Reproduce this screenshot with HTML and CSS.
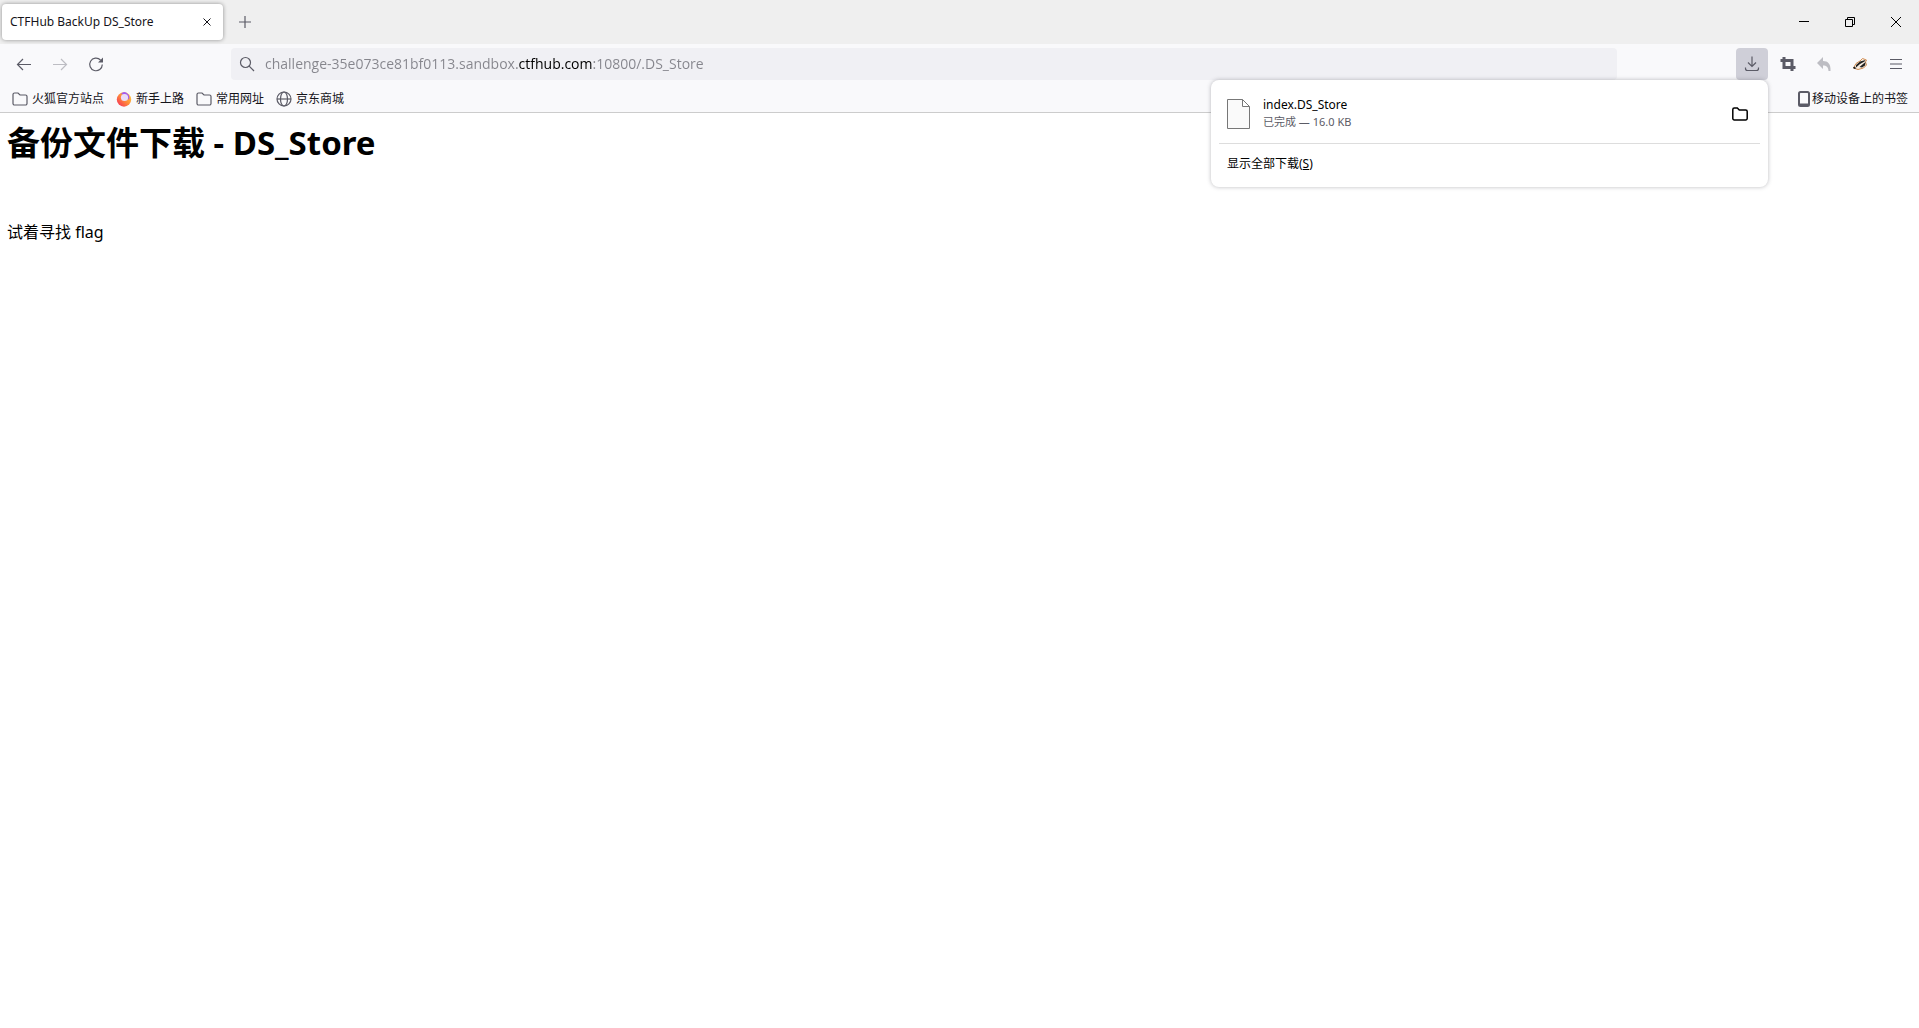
FILE: index.html
```html
<!DOCTYPE html>
<html lang="zh-CN">
<head>
<meta charset="utf-8">
<title>CTFHub BackUp DS_Store</title>
<link rel="stylesheet" href="styles.css">
</head>
<body>
<header class="chrome">
  <div class="tabbar">
    <div class="tab">
      <span class="tab-title">CTFHub BackUp DS_Store</span>
      <button class="tab-close" aria-label="关闭标签页"><svg width="8" height="8" viewBox="0 0 8 8"><path d="M.5.5l7 7M7.5.5l-7 7"/></svg></button>
    </div>
    <button class="tool" aria-label="新建标签页"><svg width="12" height="12" viewBox="0 0 12 12"><path d="M6 0v12M0 6h12"/></svg></button>
    <div class="window-controls">
      <button class="win" aria-label="最小化"><svg width="10" height="10" viewBox="0 0 10 10"><path d="M0 4.5h10"/></svg></button>
      <button class="win" aria-label="还原"><svg width="10" height="10" viewBox="0 0 10 10"><path d="M.5 2.500h7v7h-7zM2.500 2.500v-2h7v7h-2"/></svg></button>
      <button class="win" aria-label="关闭"><svg width="10" height="10" viewBox="0 0 10 10"><path d="M0 0l10 10M10 0L0 10"/></svg></button>
    </div>
  </div>
  <nav class="toolbar" aria-label="导航">
    <div class="tools">
      <button class="tool" aria-label="后退"><svg width="16" height="16" viewBox="0 0 16 16"><path d="M15 8.500H1.500M7 3L1.500 8.500L7 14"/></svg></button>
      <button class="tool" aria-label="前进" disabled><svg width="16" height="16" viewBox="0 0 16 16"><path d="M1 8.500h13.500M9 3l5.500 5.500L9 14"/></svg></button>
      <button class="tool" aria-label="刷新"><svg width="16" height="16" viewBox="0 0 16 16"><path d="M12.500 4A6.300 6.300 0 1 0 14.300 8.500"/><path class="solid" d="M15 1.500v5h-5z"/></svg></button>
    </div>
    <label class="urlbar">
      <svg width="16" height="16" viewBox="0 0 16 16" aria-hidden="true"><circle cx="6.500" cy="6.500" r="5"/><path d="M10.200 10.200L15 15"/></svg>
      <input class="url" type="text" aria-label="地址栏" value="challenge-35e073ce81bf0113.sandbox.ctfhub.com:10800/.DS_Store">
    </label>
    <div class="tools">
      <div class="download-anchor">
        <button class="tool active" aria-label="下载"><svg width="16" height="16" viewBox="0 0 16 16"><path d="M8 .5v10M4 6.500l4 4l4-4M1.500 11.500v1a2 2 0 0 0 2 2h9a2 2 0 0 0 2-2v-1"/></svg></button>
        <section class="panel" aria-label="下载">
          <div class="download">
            <svg class="file" width="24" height="32" viewBox="0 0 24 32"><path d="M.5 1.500h15l7 7v22H.5zM15.500 1.500v7h7"/></svg>
            <div class="details">
              <div class="name">index.DS_Store</div>
              <div class="status">已完成 — 16.0 KB</div>
            </div>
            <button class="open" aria-label="打开所在文件夹"><svg width="16" height="16" viewBox="0 0 16 16"><path d="M.8 12.500v-9a1.500 1.500 0 0 1 1.500-1.500h3l2 2h6.400a1.500 1.500 0 0 1 1.500 1.500v7a1.500 1.500 0 0 1-1.500 1.500H2.300a1.500 1.500 0 0 1-1.500-1.500z"/></svg></button>
          </div>
          <button class="show-all">显示全部下载(<u>S</u>)</button>
        </section>
      </div>
      <button class="tool" aria-label="截图"><svg class="crop" width="16" height="16" viewBox="0 0 16 16"><path d="M4 1v10.500h11.500M.5 4.500H12V15"/></svg></button>
      <button class="tool" aria-label="撤销" disabled><svg width="16" height="16" viewBox="0 0 16 16"><path class="solid" d="M7 1v4c5 0 8 3 7.500 10h-2c-.2-4-2-5.500-5.500-5.500v3.500L1 7z"/></svg></button>
      <button class="tool" aria-label="HackBar"><svg class="badger" width="16" height="16" viewBox="0 0 16 16"><path fill="#f8eee2" stroke="#d08c52" d="M1.500 12L4 7.500L8 5L10.500 2.500L14.500 4L13.500 6L14.500 9L11.500 12L6 13.500z"/><path fill="#222" d="M4 9L8 5.500L13.500 4L12.500 5.500L8 8L4 11.500zM7.500 11L11 8L13.500 6L13 9.500L10 11.500zM1 11.500l2-1l1 2l-2 .500z"/></svg></button>
      <button class="tool" aria-label="打开应用程序菜单"><svg width="16" height="16" viewBox="0 0 16 16"><path d="M2 3.500h12M2 8h12M2 12.500h12"/></svg></button>
    </div>
  </nav>
  <nav class="bookmarks" aria-label="书签">
    <a class="bookmark" href="#"><svg width="16" height="16" viewBox="0 0 16 16"><path d="M1 12.500v-9A1.500 1.500 0 0 1 2.500 2H6l2 2h5.500A1.500 1.500 0 0 1 15 5.500v7a1.500 1.500 0 0 1-1.500 1.500h-11A1.500 1.500 0 0 1 1 12.500z"/></svg>火狐官方站点</a>
    <a class="bookmark" href="#"><svg width="16" height="16" viewBox="0 0 16 16"><defs><linearGradient id="flame" x1="1" y1="0" x2="0" y2="1"><stop offset="0" stop-color="#ffdc3e"/><stop offset=".5" stop-color="#ff8a3a"/><stop offset="1" stop-color="#f4245e"/></linearGradient></defs><circle cx="8" cy="8.500" r="7.200" fill="url(#flame)" stroke="none"/><path fill="#a45cf0" stroke="none" d="M5 3Q8-1 12 3Q14 5 13 9Q11 4 5 3z"/><circle cx="8.500" cy="6.500" r="3.600" fill="#eadcf8" stroke="none"/></svg>新手上路</a>
    <a class="bookmark" href="#"><svg width="16" height="16" viewBox="0 0 16 16"><path d="M1 12.500v-9A1.500 1.500 0 0 1 2.500 2H6l2 2h5.500A1.500 1.500 0 0 1 15 5.500v7a1.500 1.500 0 0 1-1.500 1.500h-11A1.500 1.500 0 0 1 1 12.500z"/></svg>常用网址</a>
    <a class="bookmark" href="#"><svg width="16" height="16" viewBox="0 0 16 16"><circle cx="8" cy="8" r="7"/><ellipse cx="8" cy="8" rx="3.500" ry="7"/><path d="M1 8h14"/></svg>京东商城</a>
    <a class="bookmark mobile" href="#"><svg width="12" height="16" viewBox="0 0 12 16"><rect x="1" y="1" width="10" height="14" rx="1.500"/><path d="M1 13.500h10"/></svg>移动设备上的书签</a>
  </nav>
</header>
<main class="page">
  <h1>备份文件下载 - DS_Store</h1>
  <p>试着寻找 flag</p>
</main>
</body>
</html>
```
FILE: styles.css
```css
* { box-sizing: border-box; }
body {
  margin: 0;
  background: #fff;
  color: #000;
  font: 12px/16px "Noto Sans", "Noto Sans CJK SC", sans-serif;
}
button {
  display: flex;
  align-items: center;
  justify-content: center;
  padding: 0;
  border: 0;
  background: none;
  color: inherit;
  font: inherit;
}
svg { flex: none; fill: none; stroke: currentColor; stroke-width: 1.2; }
.solid { fill: currentColor; stroke: none; }
.chrome { background: #f9f9fb; border-bottom: 1px solid #ccc; color: #5b5b66; }
.tabbar { display: flex; align-items: center; height: 44px; padding-left: 2px; background: #efefef; }
.tab {
  display: flex;
  align-items: center;
  justify-content: space-between;
  width: 221px;
  height: 36px;
  padding: 0 8px;
  border-radius: 4px;
  background: #fff;
  box-shadow: 0 0 4px rgba(0, 0, 0, .4);
  color: #15141a;
}
.tab-close { width: 16px; height: 16px; }
.tab-close svg { stroke-width: 1; }
.tabbar > .tool { margin-left: 6px; }
.window-controls { display: flex; margin-left: auto; color: #000; }
.win { width: 46px; height: 36px; }
.win svg { stroke-width: 1; }
.toolbar { display: flex; align-items: center; height: 40px; padding: 0 7px 0 8px; }
.tools { display: flex; gap: 4px; }
.tool { width: 32px; height: 32px; border-radius: 4px; }
.tool:disabled { color: #bdbdc3; }
.tool.active { background: #cfcfd8; }
.crop { stroke-width: 3; }
.badger { stroke-width: 1; }
.badger path + path { stroke: none; }
.urlbar {
  display: flex;
  flex: 1;
  align-items: center;
  gap: 10px;
  height: 32px;
  margin: 0 119px;
  padding: 0 8px;
  border-radius: 4px;
  background: #f0f0f4;
}
/* The registrable domain is darker than the rest of the address. */
.url {
  flex: 1;
  min-width: 0;
  height: 24px;
  padding: 0 0 2px;
  border: 0;
  outline: 0;
  background: linear-gradient(90deg, #85858c 254px, #000 254px 328px, #85858c 328px);
  background-clip: text;
  color: transparent;
  font: 14px/22px "Open Sans", sans-serif;
}
.bookmarks { display: flex; align-items: center; gap: 12px; height: 28px; padding: 1px 11px 0 12px; }
.bookmark { display: flex; align-items: center; gap: 4px; color: #15141a; text-decoration: none; }
.bookmark svg { color: #5b5b66; }
.mobile { gap: 2px; margin-left: auto; }
.mobile svg { stroke-width: 2; }
.download-anchor { position: relative; }
.panel {
  position: absolute;
  z-index: 1;
  top: 32px;
  right: 0;
  width: 557px;
  padding: 8px 8px 4px;
  border-radius: 8px;
  background: #fff;
  box-shadow: 0 0 4px rgba(58, 57, 68, .35);
  color: #000;
}
.download { display: flex; align-items: center; height: 56px; padding: 0 8px 4px; border-bottom: 1px solid #ddd; }
.file { color: #777; stroke-width: 1; fill: #fafafa; }
.details { flex: 1; padding-left: 12px; }
.name { line-height: 18px; }
.status { padding-bottom: 2px; color: #5b5b66; font-size: 11px; }
.open { width: 24px; height: 24px; }
.open svg { stroke-width: 1.5; }
.show-all { height: 39px; padding: 0 8px; }
.page { padding: 9px 7px; }
.page h1 { margin: 0; font-size: 33px; line-height: 42px; }
.page p { margin: 57px 0 0; font-size: 16px; line-height: 22px; }
```
